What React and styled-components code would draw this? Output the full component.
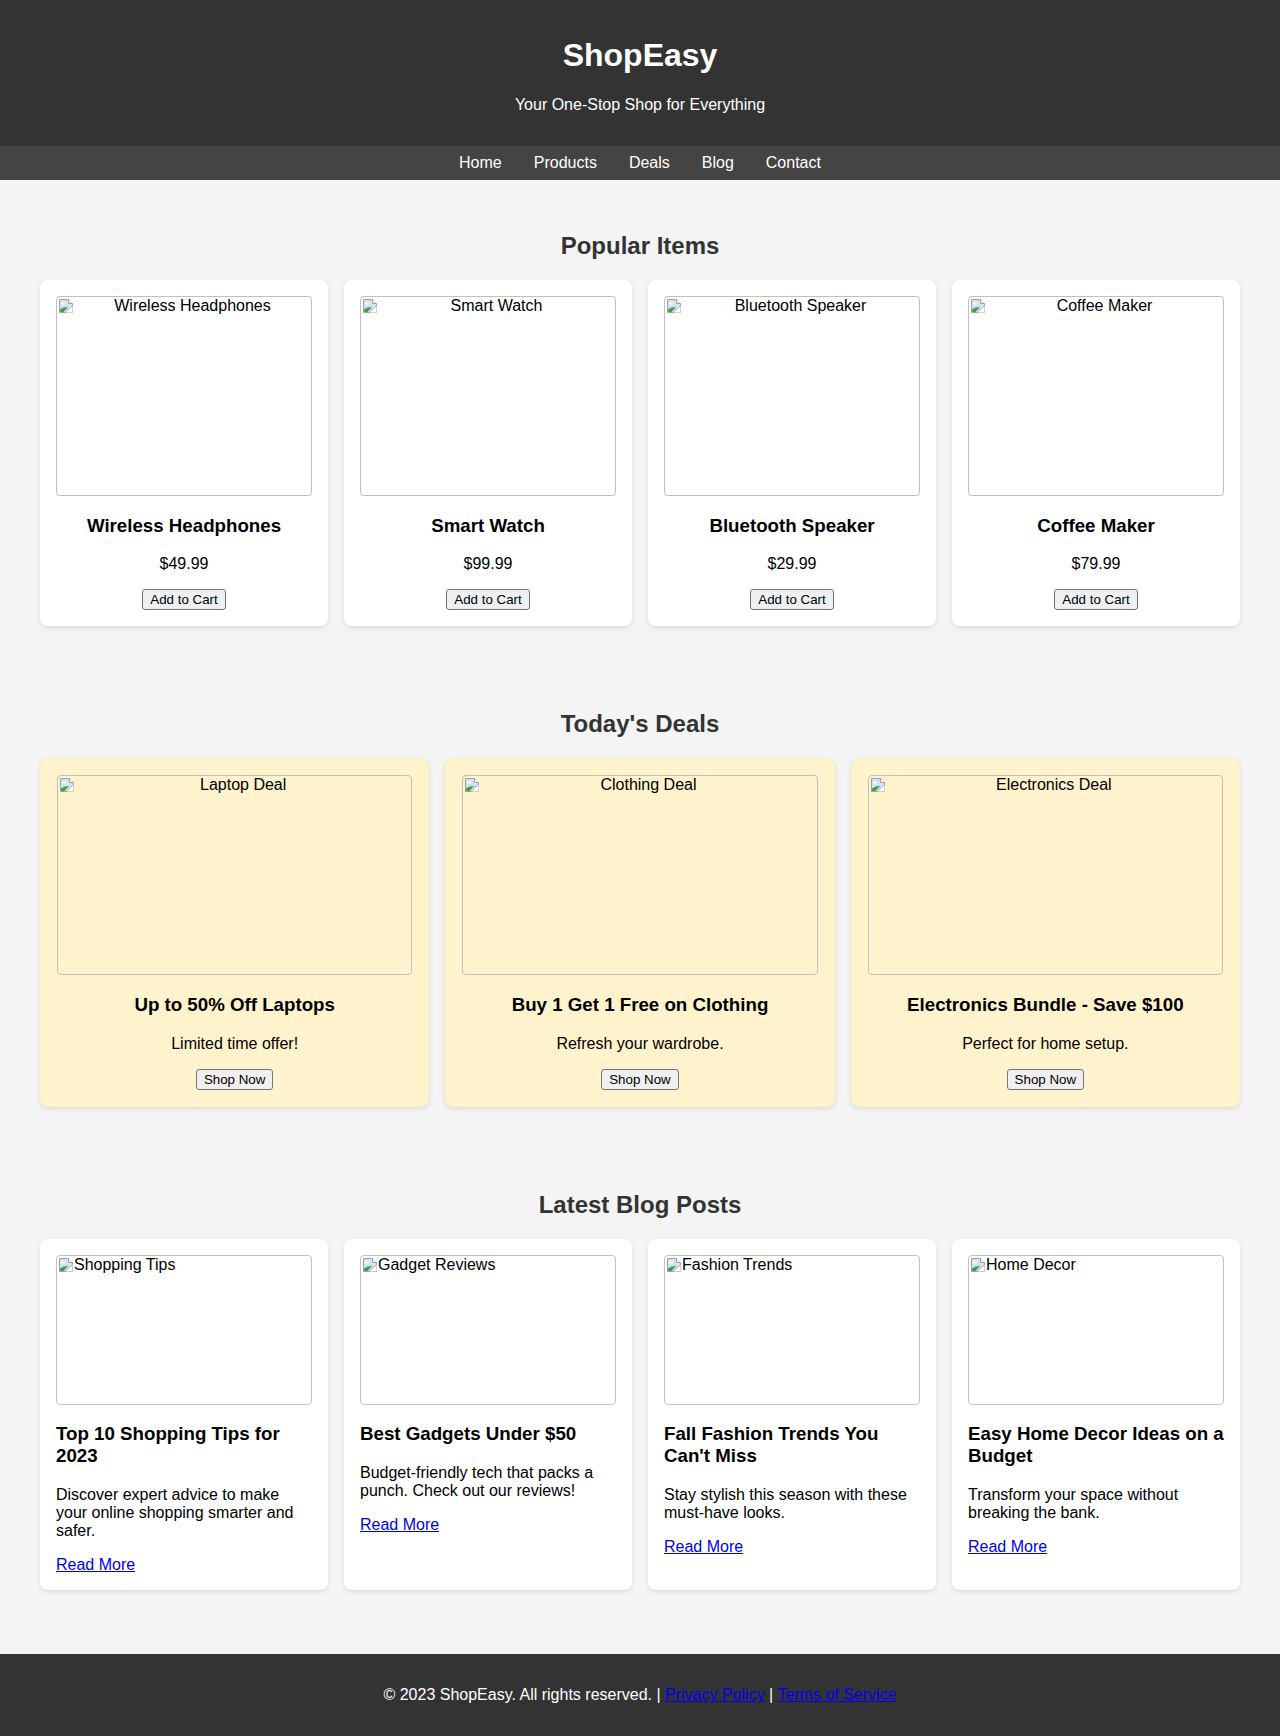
import React from "react";
import styled, { createGlobalStyle } from "styled-components";

const popularItems = [
  { name: "Wireless Headphones", price: "$49.99" },
  { name: "Smart Watch", price: "$99.99" },
  { name: "Bluetooth Speaker", price: "$29.99" },
  { name: "Coffee Maker", price: "$79.99" },
];

const deals = [
  { alt: "Laptop Deal", title: "Up to 50% Off Laptops", text: "Limited time offer!" },
  { alt: "Clothing Deal", title: "Buy 1 Get 1 Free on Clothing", text: "Refresh your wardrobe." },
  { alt: "Electronics Deal", title: "Electronics Bundle - Save $100", text: "Perfect for home setup." },
];

const posts = [
  {
    alt: "Shopping Tips",
    title: "Top 10 Shopping Tips for 2023",
    text: "Discover expert advice to make your online shopping smarter and safer.",
  },
  {
    alt: "Gadget Reviews",
    title: "Best Gadgets Under $50",
    text: "Budget-friendly tech that packs a punch. Check out our reviews!",
  },
  {
    alt: "Fashion Trends",
    title: "Fall Fashion Trends You Can't Miss",
    text: "Stay stylish this season with these must-have looks.",
  },
  {
    alt: "Home Decor",
    title: "Easy Home Decor Ideas on a Budget",
    text: "Transform your space without breaking the bank.",
  },
];

function BrokenIcon() {
  return (
    <IconWrap>
      <svg width="16" height="16" viewBox="0 0 16 16">
        <path d="M1.5 1.5 H10.5 L14.5 5.5 V14.5 H1.5 Z" fill="#cfe3f6" stroke="#9aa3ad" />
        <path d="M10.5 1.5 V5.5 H14.5" fill="#fff" stroke="#9aa3ad" />
        <ellipse cx="5" cy="5.5" rx="2" ry="1.2" fill="#fff" />
        <path d="M2 14 V11.5 Q5 8.5 10 9 L5.5 14 Z" fill="#3fa535" />
        <path d="M7 14.5 L14.5 7.5 V14.5 Z" fill="#fff" />
        <path d="M7 14.5 L14.5 7.5" stroke="#9aa3ad" strokeWidth="0.8" />
      </svg>
    </IconWrap>
  );
}

function ImagePlaceholder({ alt, height, align }) {
  return (
    <ImageFrame $height={height} $align={align}>
      <BrokenIcon />
      {alt}
    </ImageFrame>
  );
}

export default function App() {
  return (
    <>
      <GlobalStyle />
      <Header>
        <Logo>ShopEasy</Logo>
        <Tagline>Your One-Stop Shop for Everything</Tagline>
      </Header>
      <Nav>
        <NavLink href="#">Home</NavLink>
        <NavLink href="#">Products</NavLink>
        <NavLink href="#">Deals</NavLink>
        <NavLink href="#">Blog</NavLink>
        <NavLink href="#">Contact</NavLink>
      </Nav>
      <Main>
        <Section>
          <SectionTitle>Popular Items</SectionTitle>
          <Grid $cols={4}>
            {popularItems.map((item) => (
              <Card key={item.name}>
                <ImagePlaceholder alt={item.name} height={200} align="center" />
                <CardTitle>{item.name}</CardTitle>
                <CardText>{item.price}</CardText>
                <ActionButton>Add to Cart</ActionButton>
              </Card>
            ))}
          </Grid>
        </Section>
        <Section>
          <SectionTitle>Today's Deals</SectionTitle>
          <Grid $cols={3}>
            {deals.map((deal) => (
              <Card key={deal.alt} $deal>
                <ImagePlaceholder alt={deal.alt} height={200} align="center" />
                <CardTitle>{deal.title}</CardTitle>
                <CardText>{deal.text}</CardText>
                <ActionButton>Shop Now</ActionButton>
              </Card>
            ))}
          </Grid>
        </Section>
        <Section>
          <SectionTitle>Latest Blog Posts</SectionTitle>
          <Grid $cols={4}>
            {posts.map((post) => (
              <Card key={post.alt} $left>
                <ImagePlaceholder alt={post.alt} height={150} align="left" />
                <CardTitle>{post.title}</CardTitle>
                <CardText>{post.text}</CardText>
                <Link href="#">Read More</Link>
              </Card>
            ))}
          </Grid>
        </Section>
      </Main>
      <Footer>
        <FooterText>
          © 2023 ShopEasy. All rights reserved. | <Link href="#">Privacy Policy</Link> |{" "}
          <Link href="#">Terms of Service</Link>
        </FooterText>
      </Footer>
    </>
  );
}

const GlobalStyle = createGlobalStyle`
  body {
    margin: 0;
    font-family: "Liberation Sans", Arial, sans-serif;
    background: #f4f4f4;
    color: #000;
  }
`;

const Header = styled.header`
  background: #333;
  color: #fff;
  padding: 16px;
  text-align: center;
`;

const Logo = styled.h1`
  font-size: 32px;
  margin: 21.44px 0;
`;

const Tagline = styled.p`
  font-size: 16px;
  margin: 16px 0;
`;

const Nav = styled.nav`
  background: #444;
  padding: 8px;
  display: flex;
  justify-content: center;
`;

const NavLink = styled.a`
  color: #fff;
  text-decoration: none;
  font-size: 16px;
  margin: 0 16px;
`;

const Main = styled.main`
  padding-bottom: 32px;
`;

const Section = styled.section`
  padding: 32px 40px;
`;

const SectionTitle = styled.h2`
  font-size: 24px;
  color: #333;
  text-align: center;
  margin: 20px 0;
`;

const Grid = styled.div`
  display: grid;
  grid-template-columns: repeat(${(p) => p.$cols}, 1fr);
  gap: 16px;
`;

const Card = styled.div`
  background: ${(p) => (p.$deal ? "#fff3cd" : "#fff")};
  border: ${(p) => (p.$deal ? "1px solid #ffeeba" : "none")};
  border-radius: 8px;
  box-shadow: 0 2px 5px rgba(0, 0, 0, 0.1);
  padding: 16px;
  text-align: ${(p) => (p.$left ? "left" : "center")};
`;

const ImageFrame = styled.div`
  height: ${(p) => p.$height}px;
  box-sizing: border-box;
  border: 1px solid #c0c0c0;
  border-radius: 4px;
  text-align: ${(p) => p.$align};
  font-size: 16px;
  line-height: normal;
  overflow: hidden;
`;

const IconWrap = styled.span`
  float: left;
  width: 16px;
  height: 16px;
  margin: 1px 0 0 1px;

  svg {
    display: block;
  }
`;

const CardTitle = styled.h3`
  font-size: 18.72px;
  margin: 18.72px 0;
`;

const CardText = styled.p`
  font-size: 16px;
  margin: 16px 0;
`;

const ActionButton = styled.button`
  font-family: "Liberation Sans", Arial, sans-serif;
  font-size: 13.333px;
  line-height: normal;
  padding: 2px 7px;
  background: #efefef;
  border: 1px solid #767676;
  border-radius: 3px;
  color: #000;
`;

const Link = styled.a`
  color: #0000ee;
  text-decoration: underline;
`;

const Footer = styled.footer`
  background: #333;
  color: #fff;
  text-align: center;
  padding: 16px;
`;

const FooterText = styled.p`
  margin: 16px 0;
`;
